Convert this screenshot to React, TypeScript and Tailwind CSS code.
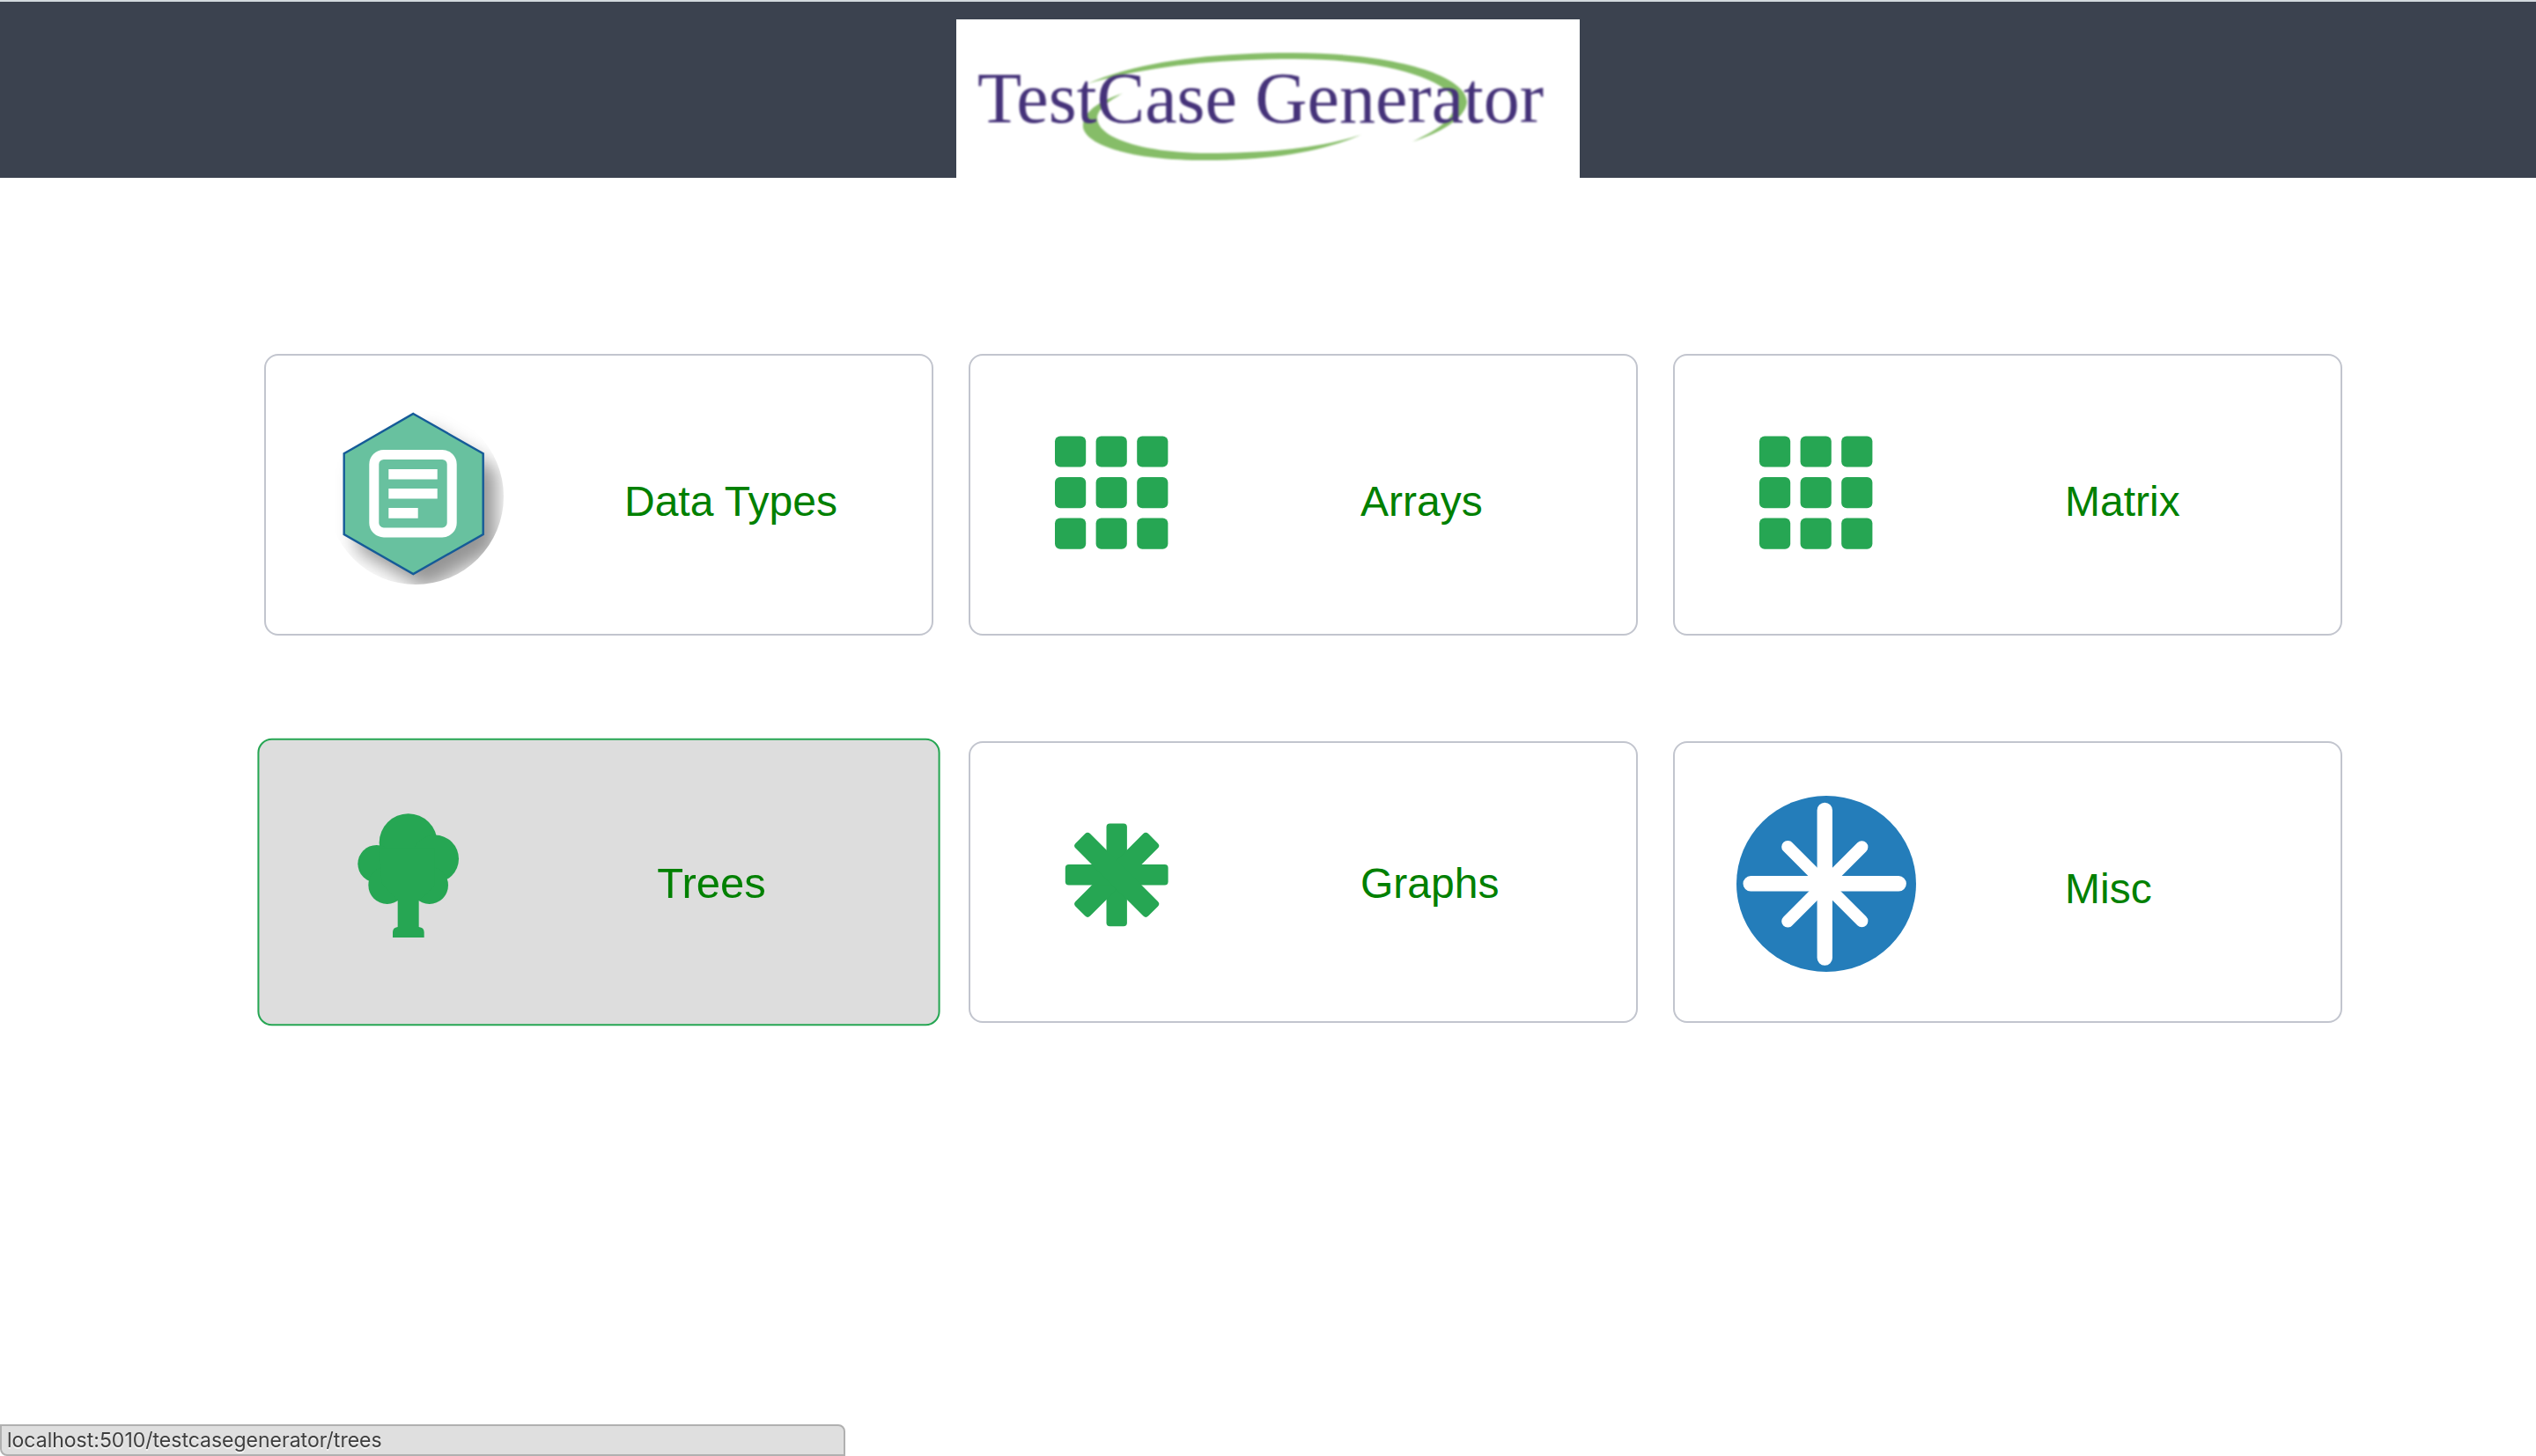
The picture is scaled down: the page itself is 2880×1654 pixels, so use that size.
import type { ReactNode } from "react";

const GREEN = "#26a653";

function Logo() {
  return (
    <svg viewBox="0 0 708 180" className="block h-[180px] w-[708px]" role="img" aria-label="TestCase Generator">
      <g transform="translate(-1086 -22)" className="blur-[1px]">
        <path
          fill="#86bd68"
          d="M1235 95C1290 71 1370 60 1468 60C1588 60 1666 87 1666 116C1664 135 1635 151 1604 161C1640 144 1653 132 1652 115C1646 93 1580 67 1470 67C1380 67 1300 76 1235 95Z"
        />
        <path
          fill="#86bd68"
          d="M1275 106C1238 118 1229 133 1230 145C1235 167 1290 182 1370 182C1440 182 1500 173 1546 153C1500 168 1440 174 1372 174C1300 174 1245 157 1246 133C1247 124 1258 115 1275 106Z"
        />
        <text
          x="1110"
          y="139"
          fontSize="82"
          fill="#453279"
          style={{ fontFamily: '"Liberation Serif", serif' }}
        >
          TestCase Generator
        </text>
      </g>
    </svg>
  );
}

function Slot({ children }: { children: ReactNode }) {
  return (
    <svg viewBox="0 0 204 200" className="mt-[60px] ml-[70px] block h-[200px] w-[204px] shrink-0" aria-hidden="true">
      {children}
    </svg>
  );
}

function DataTypesIcon() {
  const hex = "97.3,6 176.7,51.3 176.7,143 97.3,188 18.7,143 18.7,51.3";
  return (
    <Slot>
      <defs>
        <clipPath id="disc">
          <circle cx="100" cy="100" r="100" />
        </clipPath>
        <filter id="soft" x="-30%" y="-30%" width="160%" height="160%">
          <feGaussianBlur stdDeviation="11" />
        </filter>
      </defs>
      <g clipPath="url(#disc)">
        <polygon points={hex} transform="translate(15 18)" fill="#000000" fillOpacity="0.42" filter="url(#soft)" />
      </g>
      <polygon points={hex} fill="#68c19f" stroke="#155b98" strokeWidth="2.4" />
      <rect x="52.8" y="52.5" width="88.4" height="88.4" rx="11" fill="none" stroke="#ffffff" strokeWidth="11" />
      <path fill="#ffffff" d="M69.3 69h55.4v11.6H69.3zM69.3 91h55.4v11.4H69.3zM69.3 113h33.4v11.7H69.3z" />
    </Slot>
  );
}

function GridIcon() {
  const steps = [0, 46.6, 93.2];
  return (
    <Slot>
      <g fill={GREEN}>
        {steps.map((y) =>
          steps.map((x) => <rect key={`${x}-${y}`} x={26 + x} y={31.4 + y} width="35.2" height="35.2" rx="6" />),
        )}
      </g>
    </Slot>
  );
}

function TreeIcon() {
  return (
    <Slot>
      <g fill={GREEN} transform="translate(39.7 21.8) scale(0.3268) translate(-379 -283)">
        <circle cx="551" cy="382" r="99" />
        <circle cx="642" cy="437" r="81" />
        <circle cx="443" cy="454" r="64" />
        <circle cx="479" cy="527" r="64" />
        <circle cx="623" cy="527" r="64" />
        <path d="M453 400H640V530L587 580V669Q605 671 605 687V705H498V687Q498 671 515 669V580L460 520Z" />
      </g>
    </Slot>
  );
}

function AsteriskIcon() {
  return (
    <Slot>
      <g fill={GREEN} transform="translate(96.2 89.8)">
        {[0, 45, 90, 135].map((a) => (
          <rect key={a} x="-11.7" y="-58.4" width="23.4" height="116.8" rx="4" transform={`rotate(${a})`} />
        ))}
      </g>
    </Slot>
  );
}

function MiscIcon() {
  return (
    <Slot>
      <ellipse cx="102" cy="100" rx="102" ry="100" fill="#247dba" />
      <g stroke="#ffffff" strokeLinecap="round" fill="none">
        <path strokeWidth="17.4" d="M100.3 16.5V184M16.2 99.8H184.2" />
        <path strokeWidth="14" d="M58.2 57.9L142.4 142.3M142.4 58.2L58.2 142.6" />
      </g>
    </Slot>
  );
}

type CardProps = {
  label: string;
  href: string;
  icon: ReactNode;
  text?: string;
  active?: boolean;
};

function Card({ label, href, icon, text = "mt-[138px] ml-[169px]", active = false }: CardProps) {
  return (
    <a
      href={href}
      className={
        active
          ? "flex h-80 scale-[1.02] items-start rounded-2xl border-2 border-[#26a653] bg-[#dddddd]"
          : "flex h-80 items-start rounded-2xl border-2 border-[#c2c5ce] bg-white"
      }
    >
      {icon}
      <span className={`${text} text-[48px] leading-[56px] whitespace-nowrap text-[#008000]`}>{label}</span>
    </a>
  );
}

export default function App() {
  return (
    <div className="min-h-screen bg-white font-['Liberation_Sans',Arial,sans-serif]">
      <header className="flex justify-center border-t-2 border-[#d3dade] bg-[#3b424f] pt-5">
        <h1 className="bg-white">
          <Logo />
        </h1>
      </header>

      <main className="grid grid-cols-3 gap-x-10 gap-y-[120px] pt-[200px] pr-[220px] pb-40 pl-[300px]">
        <Card label="Data Types" href="#datatypes" icon={<DataTypesIcon />} text="mt-[138px] ml-[133px]" />
        <Card label="Arrays" href="#arrays" icon={<GridIcon />} />
        <Card label="Matrix" href="#matrix" icon={<GridIcon />} />
        <Card label="Trees" href="#trees" icon={<TreeIcon />} text="mt-[132px] ml-[169px]" active />
        <Card label="Graphs" href="#graphs" icon={<AsteriskIcon />} text="mt-[132px] ml-[169px]" />
        <Card label="Misc" href="#misc" icon={<MiscIcon />} />
      </main>

      <div className="fixed bottom-0 left-0 flex h-9 w-1/3 items-center rounded-tr-lg rounded-bl-lg border-2 border-[#b0b0b0] bg-[#dfdfdf] pl-1.5 font-[Inter,sans-serif] text-[23px] leading-8 text-[#3f3f3f] [text-shadow:0_2px_0_#f4f4f4]">
        localhost:5010/testcasegenerator/trees
      </div>
    </div>
  );
}
